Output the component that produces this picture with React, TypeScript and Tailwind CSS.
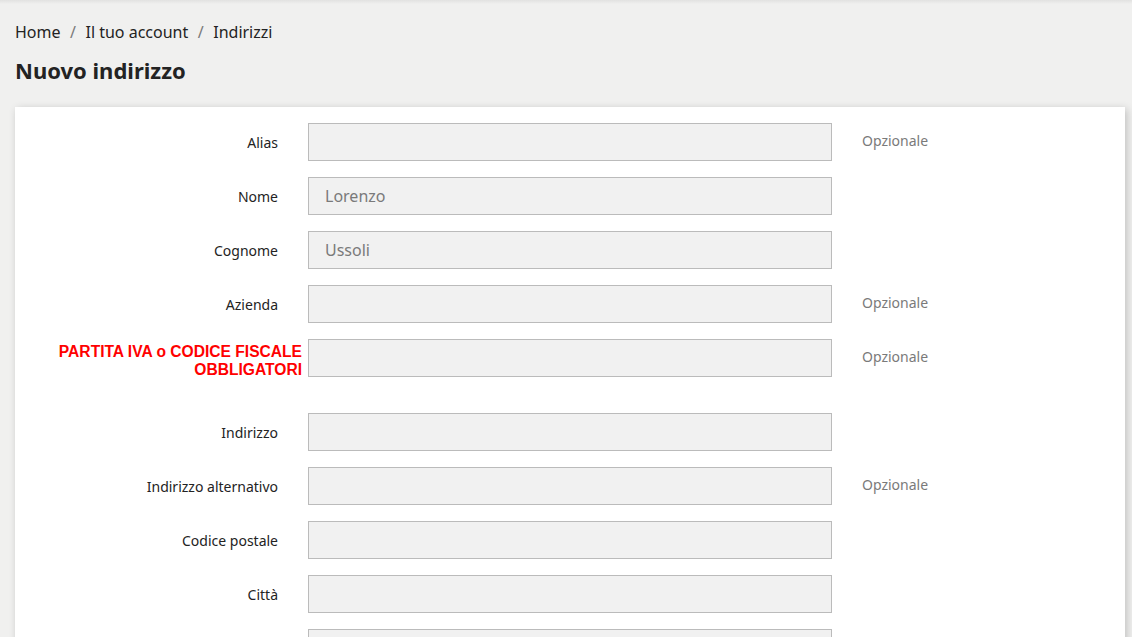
import React from "react";

type Field = {
  label: string;
  value?: string;
  optional?: boolean;
  red?: boolean;
  spaced?: boolean;
};

const fields: Field[] = [
  { label: "Alias", optional: true },
  { label: "Nome", value: "Lorenzo" },
  { label: "Cognome", value: "Ussoli" },
  { label: "Azienda", optional: true },
  { label: "PARTITA IVA o CODICE FISCALE", red: true, optional: true },
  { label: "Indirizzo", spaced: true },
  { label: "Indirizzo alternativo", optional: true },
  { label: "Codice postale" },
  { label: "Città" },
  { label: "Provincia" },
];

function Row({ f }: { f: Field }) {
  return (
    <div className={`flex items-center h-[38px] mb-4 ${f.spaced ? "mt-[36px]" : ""}`}>
      <div className="w-[277px] shrink-0 text-right pr-[15px]">
        {f.red ? (
          <span className="block mr-[-24px] pt-[5px] font-['Liberation_Sans',Arial,sans-serif] font-bold text-[15.6px] leading-[18px] text-[#ff0000] whitespace-nowrap">
            PARTITA IVA o CODICE FISCALE
            <br />
            OBBLIGATORI
          </span>
        ) : (
          <label className="text-[14px] text-[#232323]">{f.label}</label>
        )}
      </div>
      <div className="w-[554px] shrink-0 px-[15px]">
        <input
          type="text"
          defaultValue={f.value}
          className="block w-full h-[38px] bg-[#f1f1f1] border border-[#bbbbbb] px-4 text-[16px] text-[#7a7a7a] outline-none"
        />
      </div>
      <div className="pl-[15px] pb-[3px] text-[14px] text-[#7a7a7a]">{f.optional ? "Opzionale" : ""}</div>
    </div>
  );
}

export default function App() {
  return (
    <div className="h-[637px] overflow-hidden bg-[#f0f0ef] font-['Noto_Sans',sans-serif] text-[#232323]">
      <div className="h-[4px] bg-gradient-to-b from-[#e2e2e1] to-[#f0f0ef]" />
      <div className="px-[15px]">
        <nav className="flex items-center pt-[16px] text-[16px] leading-[24px] text-[#232323]">
          <span>Home</span>
          <span className="mx-[9.5px] text-[#7a7a7a]">/</span>
          <span>Il tuo account</span>
          <span className="mx-[9.5px] text-[#7a7a7a]">/</span>
          <span>Indirizzi</span>
        </nav>
        <h1 className="mt-[11px] text-[22px] leading-[30px] font-bold text-[#232323]">Nuovo indirizzo</h1>
        <div className="mt-[22px] w-[1110px] bg-white shadow-[2px_2px_8px_0_rgba(0,0,0,0.2)] pt-[16px] pl-[1px] pb-4">
          {fields.map((f) => (
            <Row key={f.label} f={f} />
          ))}
        </div>
      </div>
    </div>
  );
}
